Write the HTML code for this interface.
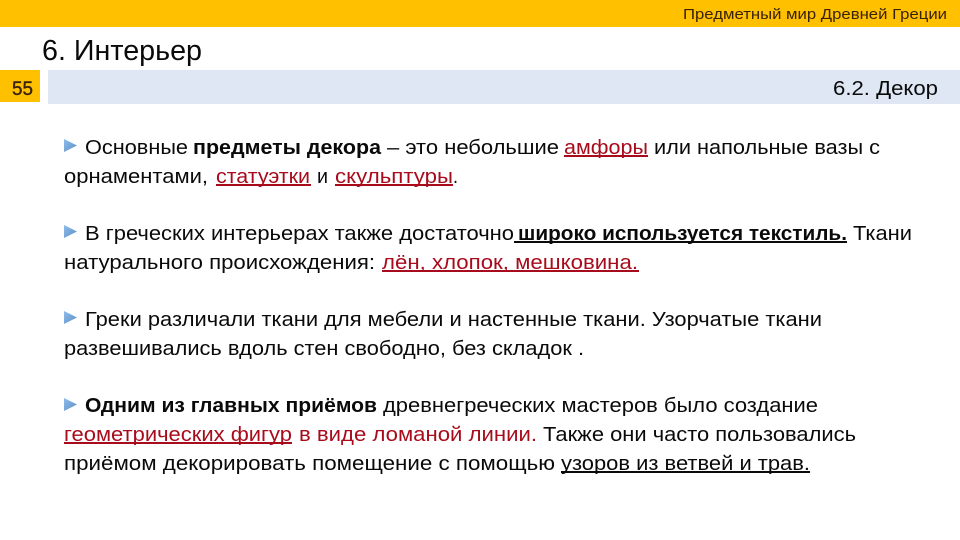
<!DOCTYPE html>
<html lang="ru"><head><meta charset="utf-8"><title>Декор</title>
<style>
html,body{margin:0;padding:0;background:#fff;width:960px;height:540px;overflow:hidden}
svg{display:block}
text{font-family:"Liberation Sans",sans-serif;font-size:20px;fill:#0a0a0a;white-space:pre}
.b{font-weight:bold}
.r{fill:#a80c1c}
</style></head><body>
<svg width="960" height="540" viewBox="0 0 960 540">
<defs>
<linearGradient id="g" x1="0" y1="0" x2="1" y2="1"><stop offset="0" stop-color="#8fbdec"/><stop offset="1" stop-color="#5b8fc2"/></linearGradient>
<polygon id="t" points="0,0 13,6.5 0,13" fill="url(#g)"/>
</defs>
<rect x="0" y="0" width="960" height="27" fill="#FFC000"/>
<rect x="0" y="70" width="40" height="32" fill="#FFC000"/>
<rect x="48" y="70" width="912" height="34" fill="#DEE7F3"/>

<text x="683" y="19" textLength="264" lengthAdjust="spacingAndGlyphs" style="font-size:15px;fill:#3a2206">Предметный мир Древней Греции</text>
<text x="42" y="60" textLength="160" lengthAdjust="spacingAndGlyphs" style="font-size:29px">6. Интерьер</text>
<text x="12" y="95" textLength="21" lengthAdjust="spacingAndGlyphs" style="font-size:19px;fill:#3a2206;stroke:#3a2206;stroke-width:.4">55</text>
<text x="833" y="95" textLength="105" lengthAdjust="spacingAndGlyphs">6.2. Декор</text>

<use href="#t" x="64" y="139"/>
<use href="#t" x="64" y="225"/>
<use href="#t" x="64" y="311"/>
<use href="#t" x="64" y="398"/>

<!-- para 1 -->
<text x="85" y="154" textLength="103" lengthAdjust="spacingAndGlyphs">Основные</text>
<text x="193" y="154" textLength="188" lengthAdjust="spacingAndGlyphs" class="b">предметы декора</text>
<text x="387" y="154" textLength="172" lengthAdjust="spacingAndGlyphs">– это небольшие</text>
<text x="564" y="154" textLength="84" lengthAdjust="spacingAndGlyphs" class="r">амфоры</text>
<rect x="564" y="155" width="84" height="2" fill="#a80c1c"/>
<text x="654" y="154" textLength="226" lengthAdjust="spacingAndGlyphs">или напольные вазы с</text>

<text x="64" y="183" textLength="144" lengthAdjust="spacingAndGlyphs">орнаментами,</text>
<text x="216" y="183" textLength="94" lengthAdjust="spacingAndGlyphs" class="r">статуэтки</text>
<rect x="216" y="184" width="95" height="2" fill="#a80c1c"/>
<text x="317" y="183" textLength="11" lengthAdjust="spacingAndGlyphs">и</text>
<text x="335" y="183" textLength="118" lengthAdjust="spacingAndGlyphs" class="r">скульптуры</text>
<rect x="335" y="184" width="118" height="2" fill="#a80c1c"/>
<text x="453" y="183" textLength="5" lengthAdjust="spacingAndGlyphs">.</text>

<!-- para 2 -->
<text x="85" y="240" textLength="429" lengthAdjust="spacingAndGlyphs">В греческих интерьерах также достаточно</text>
<text x="518" y="240" textLength="329" lengthAdjust="spacingAndGlyphs" class="b">широко используется текстиль.</text>
<rect x="514" y="241" width="333" height="2" fill="#0a0a0a"/>
<text x="853" y="240" textLength="59" lengthAdjust="spacingAndGlyphs">Ткани</text>

<text x="64" y="269" textLength="311" lengthAdjust="spacingAndGlyphs">натурального происхождения:</text>
<text x="382" y="269" textLength="256" lengthAdjust="spacingAndGlyphs" class="r">лён, хлопок, мешковина.</text>
<rect x="382" y="270" width="257" height="2" fill="#a80c1c"/>

<!-- para 3 -->
<text x="85" y="326" textLength="737" lengthAdjust="spacingAndGlyphs">Греки различали ткани для мебели и настенные ткани. Узорчатые ткани</text>
<text x="64" y="355" textLength="520" lengthAdjust="spacingAndGlyphs">развешивались вдоль стен свободно, без складок .</text>

<!-- para 4 -->
<text x="85" y="412" textLength="292" lengthAdjust="spacingAndGlyphs" class="b">Одним из главных приёмов</text>
<text x="383" y="412" textLength="435" lengthAdjust="spacingAndGlyphs">древнегреческих мастеров было создание</text>

<text x="64" y="441" textLength="228" lengthAdjust="spacingAndGlyphs" class="r">геометрических фигур</text>
<rect x="64" y="442" width="228" height="2" fill="#a80c1c"/>
<text x="299" y="441" textLength="238" lengthAdjust="spacingAndGlyphs" class="r">в виде ломаной линии.</text>
<text x="543" y="441" textLength="313" lengthAdjust="spacingAndGlyphs">Также они часто пользовались</text>

<text x="64" y="470" textLength="491" lengthAdjust="spacingAndGlyphs">приёмом декорировать помещение с помощью</text>
<text x="561" y="470" textLength="249" lengthAdjust="spacingAndGlyphs">узоров из ветвей и трав.</text>
<rect x="561" y="471" width="249" height="2" fill="#0a0a0a"/>
</svg>
</body></html>
